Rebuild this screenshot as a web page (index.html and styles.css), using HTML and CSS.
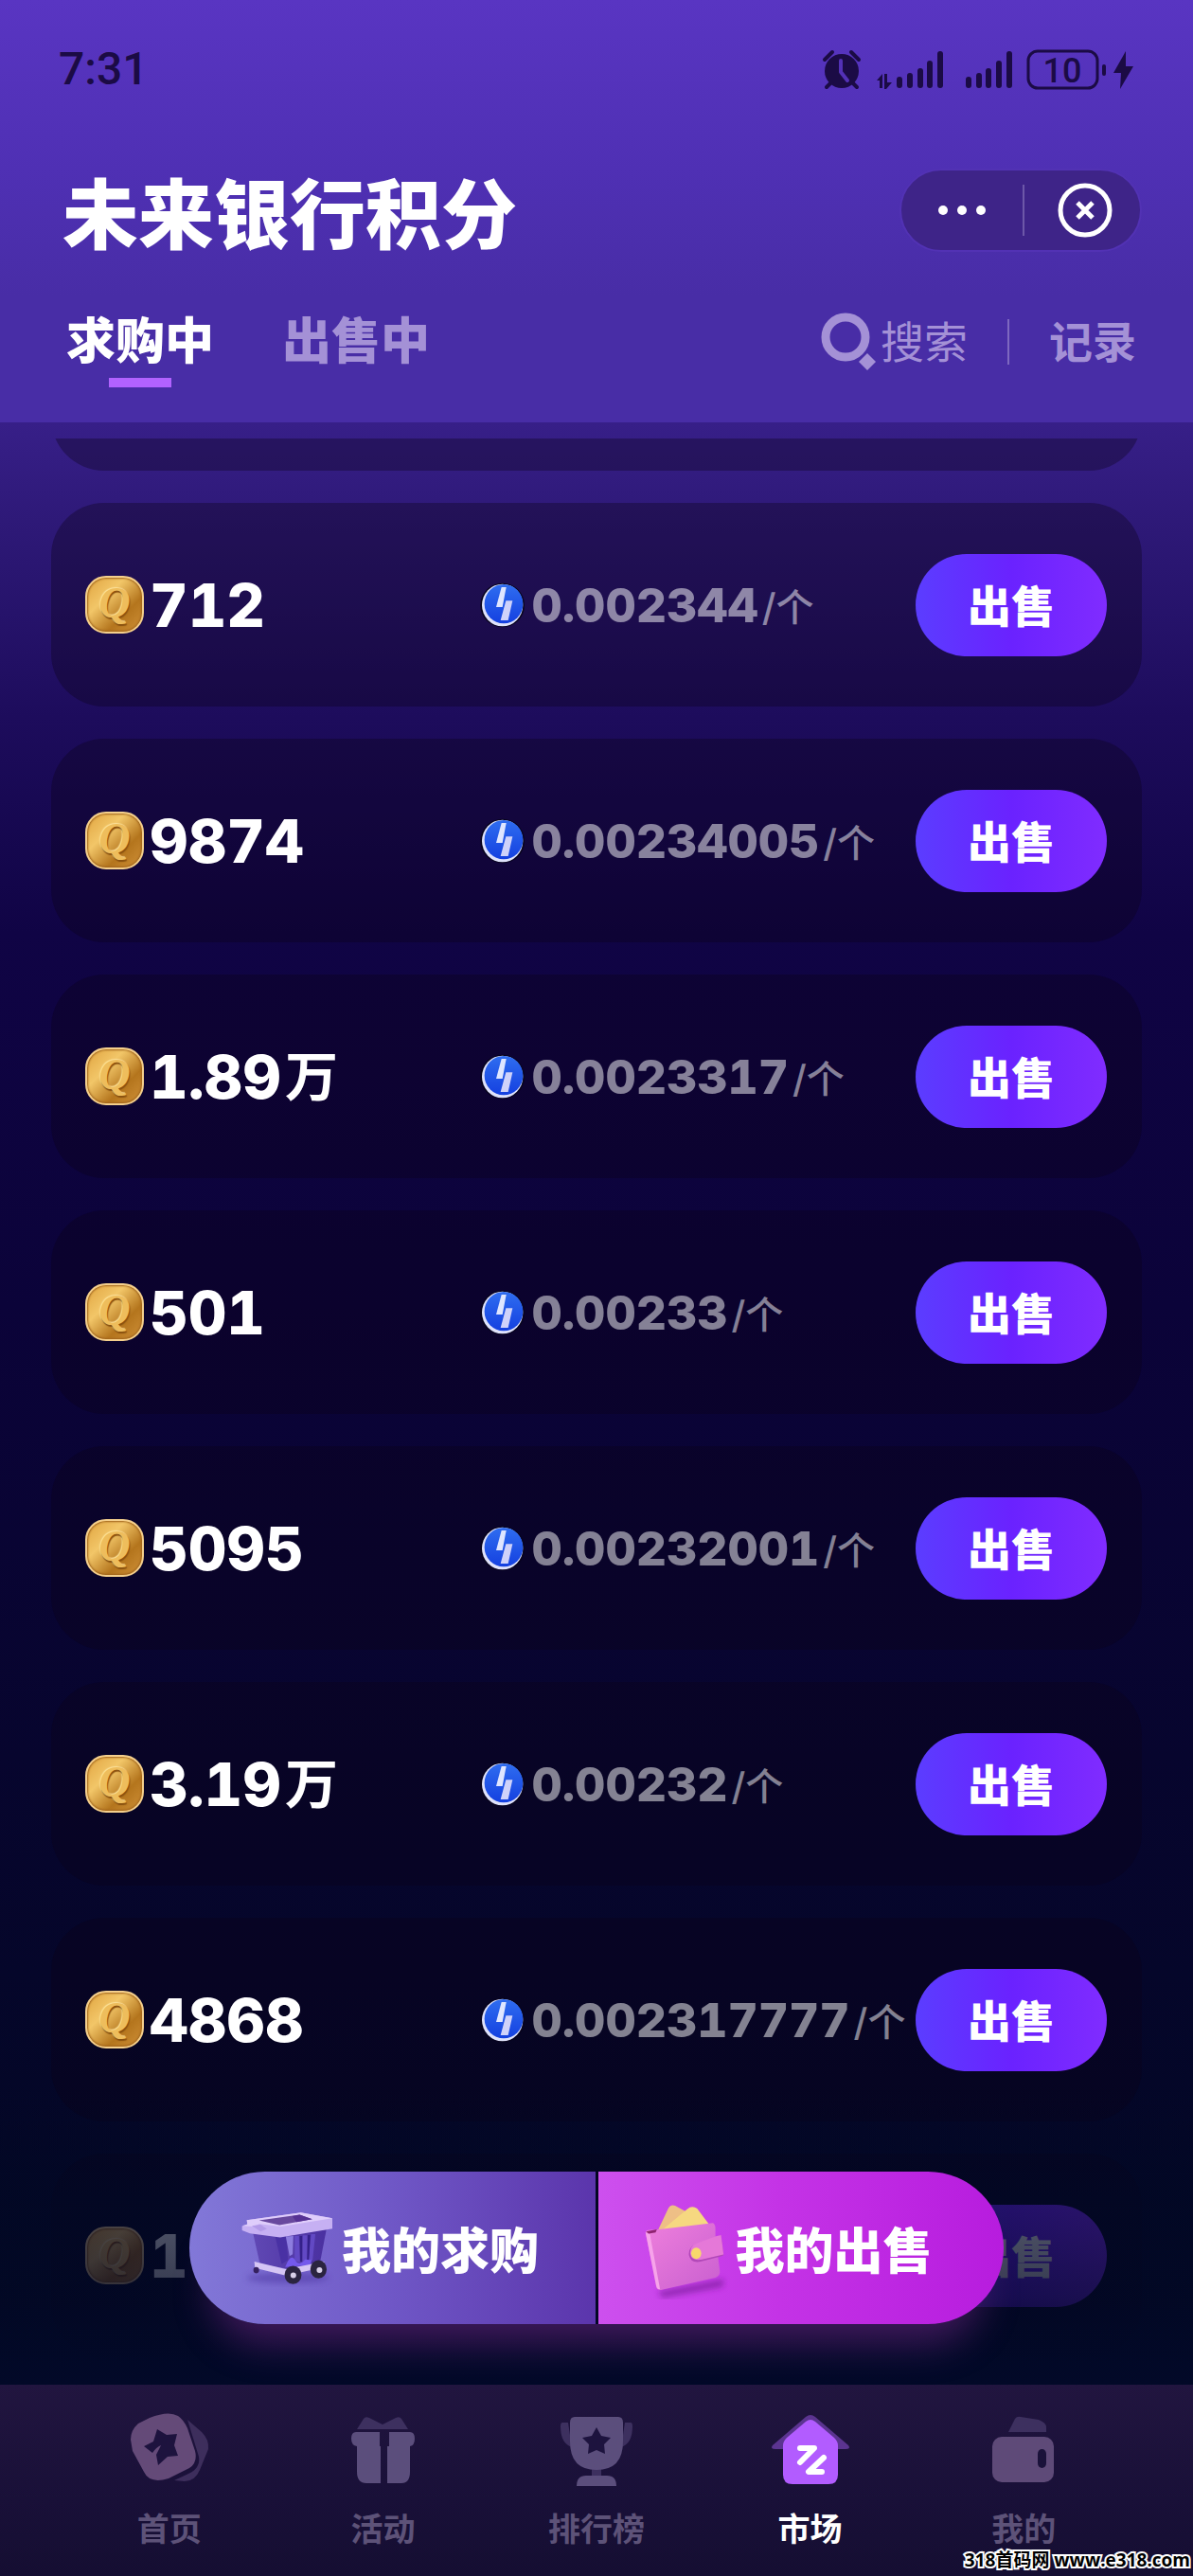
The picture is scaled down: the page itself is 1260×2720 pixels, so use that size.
FILE: index.html
```html
<!DOCTYPE html>
<html lang="zh-CN">
<head>
    <meta charset="UTF-8">
    <meta name="viewport" content="width=device-width, initial-scale=1">
    <title>未来银行积分</title>
    <link rel="stylesheet" href="styles.css">
</head>
<body>
    <!--Shared icons-->
    <svg class="defs" width="0" height="0" aria-hidden="true">
        <defs>
            <linearGradient id="blue" x1="0" y1="0" x2="0" y2="1">
                <stop offset="0" stop-color="#2f6df0"/>
                <stop offset="1" stop-color="#1440e0"/>
            </linearGradient>
            <linearGradient id="leather" x1="0" y1="0" x2="1" y2="1">
                <stop offset="0" stop-color="#ee7fdc"/>
                <stop offset="1" stop-color="#c95fd0"/>
            </linearGradient>
            <linearGradient id="bin" x1="0" y1="0" x2="1" y2="0">
                <stop offset="0" stop-color="#6048b4"/>
                <stop offset="1" stop-color="#4a30a0"/>
            </linearGradient>
            <filter id="soft" x="-30%" y="-100%" width="160%" height="300%"><feGaussianBlur stdDeviation="9"/></filter>
        </defs>
        <symbol id="token" viewBox="50 75 144 147">
            <circle cx="121" cy="150" r="70" fill="#08041c"/>
            <ellipse cx="121" cy="150" rx="65" ry="67" fill="#dfe2fb"/>
            <ellipse cx="125" cy="146" rx="61" ry="62" fill="url(#blue)"/>
            <path d="M118 93h15l-12 63h-20z" fill="#dfe6ff"/>
            <path d="M132 136h21l-14 62h-24z" fill="#cfd2fa"/>
        </symbol>
    </svg>

    <!--Header-->
    <header class="header">
        <div class="status">
            <span class="clock">7:31</span>
            <svg class="status-icons" viewBox="0 0 330 46" width="330" height="46" aria-hidden="true">
                <g fill="#1b0b45">
                    <circle cx="21" cy="25" r="18"/>
                    <path d="M3 13l8-8M39 13l-8-8M5 42l6-6M37 42l-6-6" stroke="#1b0b45" stroke-width="4" stroke-linecap="round"/>
                    <path d="M20 14v12l7 9" fill="none" stroke="#5331b6" stroke-width="4" stroke-linecap="round" stroke-linejoin="round"/>
                    <path d="M58 35l6-7v15h-3v-8zM66 28h3v9h5l-6 7h-2z"/>
                    <rect x="79" y="31" width="6" height="12" rx="3"/><rect x="90" y="27" width="6" height="16" rx="3"/><rect x="101" y="22" width="6" height="21" rx="3"/><rect x="111" y="14" width="6" height="29" rx="3"/><rect x="122" y="4" width="6" height="39" rx="3"/>
                    <rect x="152" y="31" width="6" height="12" rx="3"/><rect x="163" y="27" width="6" height="16" rx="3"/><rect x="173" y="22" width="6" height="21" rx="3"/><rect x="184" y="14" width="6" height="29" rx="3"/><rect x="195" y="4" width="6" height="39" rx="3"/>
                    <rect x="218" y="4" width="73" height="39" rx="10" fill="none" stroke="#1b0b45" stroke-width="3"/>
                    <text x="254" y="37" text-anchor="middle" class="battery">10</text>
                    <rect x="296" y="18" width="4" height="12" rx="2"/>
                    <path d="M321 4l-13 23h8l-1 17 14-24h-8z"/>
                </g>
            </svg>
        </div>

        <div class="title-bar">
            <h1>未来银行积分</h1>
            <div class="capsule">
                <button type="button" aria-label="更多">
                    <svg viewBox="0 0 60 60" width="60" height="60"><g fill="#fff"><circle cx="10" cy="30" r="5"/><circle cx="30" cy="30" r="5"/><circle cx="50" cy="30" r="5"/></g></svg>
                </button>
                <span class="capsule-line"></span>
                <button type="button" aria-label="关闭">
                    <svg viewBox="0 0 60 60" width="60" height="60" fill="none" stroke="#fff"><circle cx="30" cy="30" r="26" stroke-width="5"/><path d="M22 22l16 16M38 22L22 38" stroke-width="5"/></svg>
                </button>
            </div>
        </div>

        <nav class="tabs">
            <a href="#" class="tab active">求购中</a>
            <a href="#" class="tab">出售中</a>
            <a href="#" class="search">
                <svg viewBox="0 0 60 64" width="60" height="64" aria-hidden="true"><circle cx="27" cy="27" r="21" fill="none" stroke="#a491d6" stroke-width="9"/><path d="M41 53l9-9 9 9-9 9z" fill="#a491d6"/></svg>
                搜索
            </a>
            <span class="tabs-line"></span>
            <a href="#" class="record">记录</a>
        </nav>
    </header>

    <!--Orders-->
    <main class="market">
        <ul class="orders">
            <li class="order cut"></li>
            <li class="order">
                <span class="amount"><i class="coin">Q</i>712</span>
                <span class="price"><svg class="token"><use href="#token"/></svg>0.002344<small>/个</small></span>
                <button type="button" class="sell">出售</button>
            </li>
            <li class="order">
                <span class="amount"><i class="coin">Q</i>9874</span>
                <span class="price"><svg class="token"><use href="#token"/></svg>0.00234005<small>/个</small></span>
                <button type="button" class="sell">出售</button>
            </li>
            <li class="order">
                <span class="amount"><i class="coin">Q</i>1.89<b>万</b></span>
                <span class="price"><svg class="token"><use href="#token"/></svg>0.0023317<small>/个</small></span>
                <button type="button" class="sell">出售</button>
            </li>
            <li class="order">
                <span class="amount"><i class="coin">Q</i>501</span>
                <span class="price"><svg class="token"><use href="#token"/></svg>0.00233<small>/个</small></span>
                <button type="button" class="sell">出售</button>
            </li>
            <li class="order">
                <span class="amount"><i class="coin">Q</i>5095</span>
                <span class="price"><svg class="token"><use href="#token"/></svg>0.00232001<small>/个</small></span>
                <button type="button" class="sell">出售</button>
            </li>
            <li class="order">
                <span class="amount"><i class="coin">Q</i>3.19<b>万</b></span>
                <span class="price"><svg class="token"><use href="#token"/></svg>0.00232<small>/个</small></span>
                <button type="button" class="sell">出售</button>
            </li>
            <li class="order">
                <span class="amount"><i class="coin">Q</i>4868</span>
                <span class="price"><svg class="token"><use href="#token"/></svg>0.002317777<small>/个</small></span>
                <button type="button" class="sell">出售</button>
            </li>
            <li class="order">
                <span class="amount"><i class="coin">Q</i>1</span>
                <span class="price"></span>
                <button type="button" class="sell">出售</button>
            </li>
        </ul>
        <div class="fade"></div>

        <!--Floating buttons-->
        <div class="actions">
            <button type="button" class="my-buy">
                <svg viewBox="40 75 310 245" width="103" height="82" aria-hidden="true">
                    <ellipse cx="190" cy="292" rx="130" ry="16" fill="#4c35a0" opacity=".5" filter="url(#soft)"/>
                    <path d="M80 150l22 98 85 14 106-20 20-104z" fill="url(#bin)"/>
                    <path d="M150 158l35 0 6 76-20 14z" fill="#4931a4"/>
                    <path d="M184 160l24-2-2 58-10 6z" fill="#8d7ddf"/>
                    <path d="M212 158h14l3 84-17-4zM238 156h14l-1 86-14-2zM264 152h14l-9 84-13 4z" fill="#6249c4"/>
                    <path d="M228 158h8v82h-6zM254 155h8l-5 84h-5z" fill="#34208a"/>
                    <path d="M190 240q14-26 26-1 12 14 30-6l20 2-4 16-80 6z" fill="#7459ec"/>
                    <path d="M84 240l100 24v20L86 260zM184 264l122-24v18l-122 26z" fill="#d5c5f4"/>
                    <path d="M60 108l172-24 100 18v33l-166 28-96-13-25-10v-13l17-4z" fill="#c6b0f3"/>
                    <path d="M60 108l172-24 100 18-164 26-68-8-20 8-35-2 17-5z" fill="#dfcdfb"/>
                    <path d="M99 109l129-18 40 14-104 19z" fill="#68489e"/>
                    <path d="M205 95l23-4 40 14-50 9z" fill="#563194"/>
                    <path d="M76 126l28-4 20 14-20 8z" fill="#b49be8"/>
                    <ellipse cx="90" cy="267" rx="9" ry="10" fill="#35215f"/>
                    <ellipse cx="207" cy="282" rx="27" ry="29" fill="#2b2440"/><circle cx="208" cy="283" r="9" fill="#d8cfe8"/>
                    <ellipse cx="288" cy="264" rx="26" ry="29" fill="#2b2440"/><circle cx="291" cy="267" r="9" fill="#d8cfe8"/>
                </svg>
                我的求购
            </button>
            <button type="button" class="my-sell">
                <svg viewBox="55 30 285 325" width="95" height="108" aria-hidden="true">
                    <path d="M105 330l210-40-4 24-190 36z" fill="#7a1c9c" opacity=".7" filter="url(#soft)"/>
                    <path d="M104 138l34-72q8-14 22-9l40 22-50 60z" fill="#eebf86"/>
                    <path d="M112 140l86-72q16-13 32-2l42 56-40 26z" fill="#f6d880"/>
                    <path d="M66 142q2-8 14-8l30-2 170-20q8 4 8 18v24l14 110q2 16-14 22l-170 38q-14 3-18-10z" fill="url(#leather)"/>
                    <path d="M66 142l14 6 32 174q-10 2-12-10z" fill="#f7a3ea"/>
                    <path d="M68 139l34-7-4 10-22 4z" fill="#8e2470"/>
                    <path d="M288 158l18-6 8 62-8 4-62 16q-34 8-40-20-3-26 24-34z" fill="#b148b8"/>
                    <path d="M290 154l16-4 8 62-68 16q-34 6-38-18-2-24 22-34z" fill="#e578d8"/>
                    <ellipse cx="227" cy="208" rx="16" ry="18" fill="#f8d96c"/>
                </svg>
                我的出售
            </button>
        </div>
    </main>

    <!--Bottom tab bar-->
    <nav class="tabbar">
        <a href="#">
            <svg viewBox="0 0 90 80" width="90" height="80" aria-hidden="true">
                <path d="M64 9l15 13q8 8 7 18L77 62q-5 12-16 12l-11-1 15-7q13-6 11-18z" fill="#3d2e5c"/>
                <path d="M4 30q0-10 8-17l12-6Q44-1 54 5q6 4 10 13l8 24q3 12-6 18L44 71q-20 6-26-7L6 42z" fill="#644a78"/>
                <path d="M32 19l10 6 11-1-3 12 4 11-11 1-10 9-2-11q3-6 5-10-5 2-9 8l-9-7 10-5z" fill="#1d133e"/>
            </svg>
            首页
        </a>
        <a href="#">
            <svg viewBox="0 0 90 80" width="90" height="80" aria-hidden="true">
                <path d="M18 19l7-11q2-3 6-1l14 7 14-7q4-2 6 1l7 11z" fill="#3d305f"/>
                <path d="M17 22h25v15h1v39H28q-10 0-10-12V37q-6-1-6-8 0-7 5-7zM52 22h22q5 0 5 7 0 7-5 8v27q0 12-9 12H50V37h2z" fill="#5b4e7c"/>
            </svg>
            活动
        </a>
        <a href="#">
            <svg viewBox="0 0 90 80" width="90" height="80" aria-hidden="true">
                <path d="M15 12H9q-2 0-2 4 0 18 12 22zM75 12h6q2 0 2 4 0 18-12 22zM40 58h10v14H40z" fill="#3d305f"/>
                <path d="M22 6h46q5 0 5 6v20q0 30-28 30T17 32V12q0-6 5-6zM34 68h22q10 0 10 11H24q0-11 10-11z" fill="#5b4e7c"/>
                <path d="M45 17l5 9 10 2-7 7 1 10-9-4-9 4 1-10-7-7 10-2z" fill="#1d133e"/>
            </svg>
            排行榜
        </a>
        <a href="#" class="active">
            <svg viewBox="0 0 90 80" width="90" height="80" aria-hidden="true">
                <path d="M40 6q5-4 10 0l35 30q3 4-3 4H8q-6 0-3-4z" fill="#5b3490"/>
                <path d="M40 11q5-4 10 0l20 17q4 4 4 8v31q0 10-10 10H26q-10 0-10-10V36q0-4 4-8z" fill="#b25cff"/>
                <path d="M34 39h15L34 54M59 49L43 64h14" fill="none" stroke="#fff" stroke-width="6" stroke-linecap="round" stroke-linejoin="round"/>
            </svg>
            市场
        </a>
        <a href="#">
            <svg viewBox="0 0 90 80" width="90" height="80" aria-hidden="true">
                <path d="M29 22l7-14q2-3 6-2l19 3q8 3 8 8v5z" fill="#3d305f"/>
                <rect x="12" y="27" width="65" height="48" rx="10" fill="#5e4a78"/>
                <rect x="60" y="40" width="9" height="20" rx="5" fill="#1a123a"/>
            </svg>
            我的
        </a>
        <span class="watermark">318首码网 www.e318.com</span>
    </nav>
</body>
</html>
```
FILE: styles.css
```css
*{
    box-sizing: border-box;
}
body{
    margin: 0;
    height: 100vh;
    display: flex;
    flex-direction: column;
    overflow: hidden;
    color: #fff;
    background: #030826;
    font-family: Inter, "Noto Sans CJK SC", sans-serif;
}
a{
    color: inherit;
    text-decoration: none;
}
button{
    padding: 0;
    border: none;
    color: #fff;
    background: none;
    font-family: inherit;
    cursor: pointer;
}
svg{
    flex: none;
    display: block;
}
.defs{
    position: absolute;
}

/* header */
.header{
    flex: none;
    padding: 48px 54px 47px;
    background: linear-gradient(#5935c2, #4f30b4 40%, #482da6 70%, #482da6);
}
.status{
    display: flex;
    justify-content: space-between;
    align-items: center;
    height: 50px;
    padding: 0 8px;
}
.clock{
    color: #1b0b45;
    font: 500 48px/50px Roboto, sans-serif;
}
.battery{
    font: 500 36px Roboto, sans-serif;
}
.title-bar{
    display: flex;
    justify-content: space-between;
    align-items: center;
    margin-top: 74px;
    padding-left: 12px;
}
h1{
    margin: 0;
    padding-top: 10px;
    font-size: 80px;
    line-height: 90px;
    font-weight: 900;
}
.capsule{
    display: flex;
    align-items: center;
    justify-content: space-between;
    width: 256px;
    height: 88px;
    padding: 0 28px 0 34px;
    border: 2px solid #5232b4;
    border-radius: 44px;
    background: #3e2488;
}
.capsule-line{
    width: 2px;
    height: 54px;
    background: #6d58a8;
}
.tabs{
    display: flex;
    align-items: center;
    height: 76px;
    margin-top: 51px;
    padding: 0 6px 0 16px;
}
.tab{
    position: relative;
    margin-right: 72px;
    color: #a491d6;
    font-size: 52px;
    line-height: 76px;
    font-weight: 900;
}
.tab.active{
    color: #fff;
}
.tab.active::after{
    content: "";
    position: absolute;
    left: 50%;
    bottom: -10px;
    width: 66px;
    height: 10px;
    margin-left: -33px;
    background: #b262ff;
}
.search, .record{
    display: flex;
    align-items: center;
    gap: 4px;
    color: #a491d6;
    font-size: 46px;
    line-height: 76px;
}
.search{
    margin-left: auto;
}
.record{
    font-weight: 700;
}
.tabs-line{
    width: 2px;
    height: 48px;
    margin: 0 42px;
    background: #7e68c0;
}

/* order list */
.market{
    position: relative;
    flex: 1;
    min-height: 0;
    padding: 17px 54px 0;
    background: linear-gradient(#371f88, #2e1978 5%, #1d0c5c 15%, #100445 26%, #0b0339 45%, #07052e 68%, #030726 90%, #020a28);
}
.orders{
    height: 100%;
    margin: 0;
    padding: 0;
    list-style: none;
    overflow: hidden;
}
.order{
    display: grid;
    grid-template-columns: 9fr 10fr 202px;
    align-items: center;
    height: 215px;
    margin-bottom: 34px;
    padding: 0 37px 0 36px;
    border-radius: 56px;
    background: rgba(12, 3, 24, 0.34);
    white-space: nowrap;
}
/* card scrolled under the header */
.order.cut{
    margin-top: -181px;
}
.amount, .price{
    display: flex;
    align-items: center;
    font-variant-numeric: tabular-nums;
}
.amount{
    gap: 6px;
    font-size: 63px;
    font-weight: 800;
}
.amount b{
    font-size: 56px;
    line-height: 60px;
    font-weight: 700;
    margin-left: -2px;
}
.price{
    gap: 6px;
    padding-left: 2px;
    color: rgba(255, 255, 255, 0.5);
    font-size: 50px;
    font-weight: 800;
}
.price small{
    margin-left: -2px;
    font-size: 40px;
    font-weight: 500;
}
.coin{
    width: 62px;
    height: 61px;
    border: 2px solid #f4cf8c;
    border-radius: 22px;
    background: linear-gradient(135deg, #e0a440, #f2c668 35%, #b4751d 68%, #cf9038);
    box-shadow: inset 0 0 2px 1px #a0641c;
    color: #eebd5c;
    font: italic 700 46px/54px "Liberation Serif", serif;
    text-align: center;
    text-shadow: 1px 2px 1px #8a5210, -1px -1px 1px #fbe09a;
}
.token{
    width: 48px;
    height: 49px;
}
.sell{
    height: 108px;
    padding-bottom: 4px;
    border-radius: 54px;
    background: linear-gradient(90deg, #5b3dff, #6a22ff 50%, #802cff);
    font-size: 46px;
    font-weight: 900;
}
.fade{
    position: absolute;
    left: 0;
    right: 0;
    bottom: 0;
    height: 310px;
    background: linear-gradient(rgba(2, 8, 36, 0), rgba(2, 8, 36, 0.68) 38%, rgba(2, 8, 36, 0.8) 70%, #020928);
}

/* floating buttons */
.actions{
    position: absolute;
    left: 50%;
    bottom: 64px;
    display: grid;
    grid-template-columns: 1fr 1fr;
    gap: 3px;
    width: 860px;
    height: 161px;
    transform: translateX(-50%);
    border-radius: 80px;
    box-shadow: 0 44px 40px -24px rgba(150, 50, 170, 0.42);
}
.actions button{
    display: flex;
    align-items: center;
    gap: 4px;
    font-size: 52px;
    font-weight: 900;
}
.my-buy{
    padding-left: 54px;
    border-radius: 80px 0 0 80px;
    background: linear-gradient(90deg, #8278d8, #6f57c6 50%, #5b35ac);
}
.my-sell{
    padding-left: 46px;
    border-radius: 0 80px 80px 0;
    background: linear-gradient(90deg, #cd50ee, #c433e6 45%, #b71cde);
}

/* bottom tab bar */
.tabbar{
    position: relative;
    flex: none;
    display: grid;
    grid-template-columns: repeat(5, 1fr);
    height: 202px;
    padding: 28px 66px 0;
    background: linear-gradient(#21153f, #191038 60%, #150e32);
}
.tabbar a{
    display: flex;
    flex-direction: column;
    align-items: center;
    gap: 22px;
    color: #5d5278;
    font-size: 34px;
    line-height: 46px;
    font-weight: 700;
}
.tabbar a.active{
    color: #fff;
}
.watermark{
    position: absolute;
    right: 3px;
    bottom: 4px;
    color: #000;
    font: 700 19px/26px "Open Sans", "Noto Sans CJK SC", sans-serif;
    -webkit-text-stroke: 4px #fff;
    paint-order: stroke fill;
}
```
